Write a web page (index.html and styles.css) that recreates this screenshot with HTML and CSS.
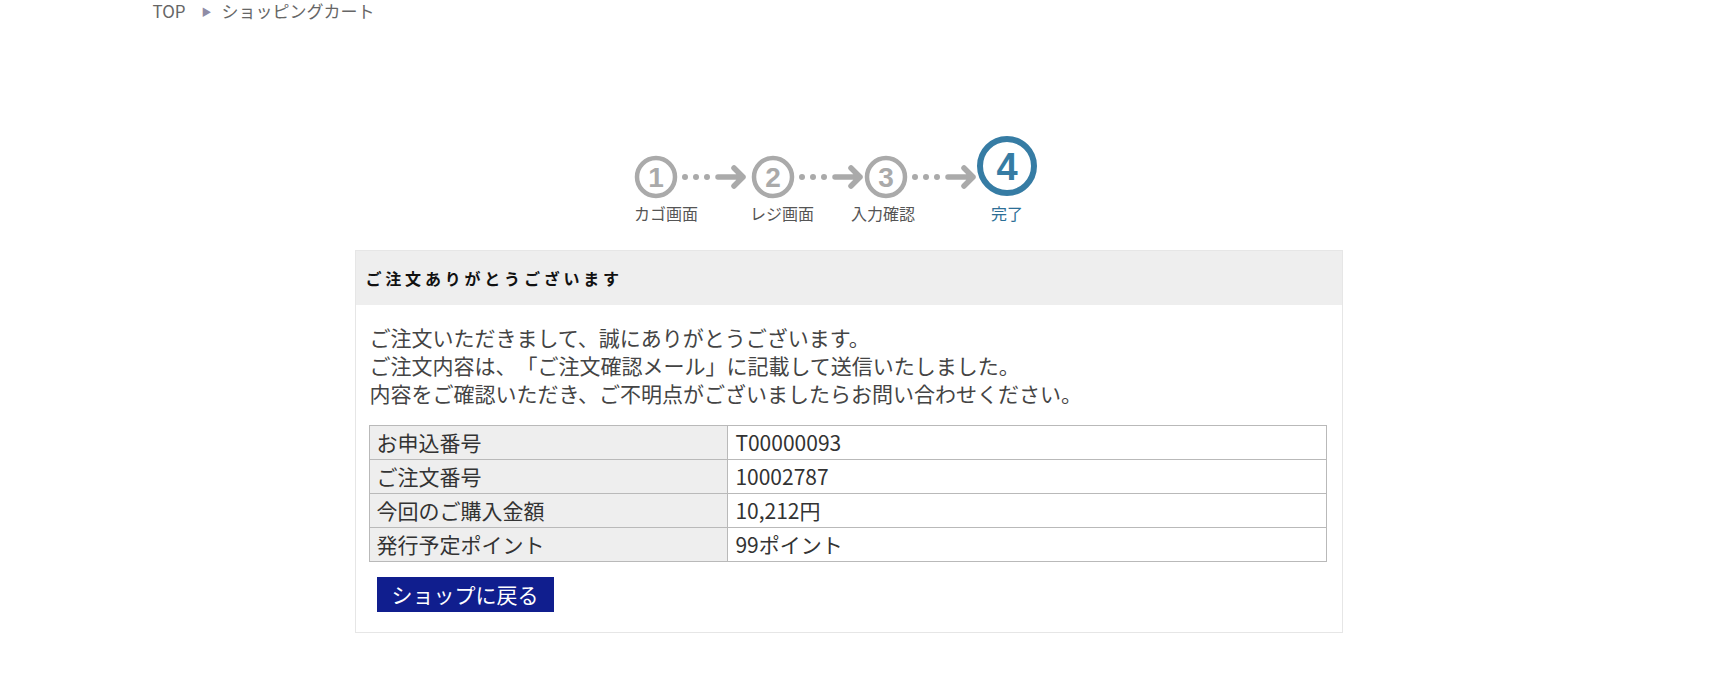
FILE: index.html
```
<!DOCTYPE html>
<html lang="ja">
<head>
  <meta charset="UTF-8">
  <title>ショッピングカート - 完了</title>
  <link rel="stylesheet" href="styles.css">
</head>
<body>
  <div class="wrap">
    <div class="breadcrumb">
      <a href="#">TOP</a><span class="sep">&#9654;</span><span>ショッピングカート</span>
    </div>

    <div class="steps">
      <svg width="988" height="100" viewBox="355 125 988 100">
        <g fill="none" stroke="#aaa" stroke-width="4.5">
          <circle cx="656" cy="177" r="19"/>
          <circle cx="773" cy="177" r="19"/>
          <circle cx="886" cy="177" r="19"/>
        </g>
        <circle cx="1007" cy="166" r="27" fill="none" stroke="#367ca4" stroke-width="6"/>
        <g fill="#aaa">
          <circle cx="685" cy="177" r="3"/><circle cx="696" cy="177" r="3"/><circle cx="707" cy="177" r="3"/>
          <circle cx="802" cy="177" r="3"/><circle cx="813" cy="177" r="3"/><circle cx="824" cy="177" r="3"/>
          <circle cx="915" cy="177" r="3"/><circle cx="926" cy="177" r="3"/><circle cx="937" cy="177" r="3"/>
        </g>
        <g fill="none" stroke="#aaa" stroke-width="5.5" stroke-linecap="round" stroke-linejoin="round">
          <path d="M718 177 H743 M734 168 L743 177 L734 186"/>
          <path d="M835 177 H860 M851 168 L860 177 L851 186"/>
          <path d="M948 177 H973 M964 168 L973 177 L964 186"/>
        </g>
        <g class="step-num" fill="#aaa">
          <text x="656" y="187" text-anchor="middle">1</text>
          <text x="773" y="187" text-anchor="middle">2</text>
          <text x="886" y="187" text-anchor="middle">3</text>
        </g>
        <text class="step-num big" x="1007" y="180" text-anchor="middle" fill="#367ca4">4</text>
        <g class="step-label" fill="#555">
          <text x="666" y="220" text-anchor="middle">カゴ画面</text>
          <text x="782" y="220" text-anchor="middle">レジ画面</text>
          <text x="883" y="220" text-anchor="middle">入力確認</text>
        </g>
        <text class="step-label" x="1007" y="220" text-anchor="middle" fill="#2d6f96">完了</text>
      </svg>
    </div>

    <div class="box">
      <h2 class="box-title">ご注文ありがとうございます</h2>
      <div class="box-body">
        <p class="message">
          ご注文いただきまして、誠にありがとうございます。<br>
          ご注文内容は、「ご注文確認メール」に記載して送信いたしました。<br>
          内容をご確認いただき、ご不明点がございましたらお問い合わせください。
        </p>

        <table class="order-info">
          <tr><th>お申込番号</th><td>T00000093</td></tr>
          <tr><th>ご注文番号</th><td>10002787</td></tr>
          <tr><th>今回のご購入金額</th><td>10,212円</td></tr>
          <tr><th>発行予定ポイント</th><td>99ポイント</td></tr>
        </table>

        <div class="actions">
          <a class="btn" href="#">ショップに戻る</a>
        </div>
      </div>
    </div>
  </div>
</body>
</html>
```
FILE: styles.css
```
body {
  margin: 0;
  background: #fff;
  color: #444;
  font-family: "Noto Sans CJK JP", "Noto Sans", sans-serif;
  text-spacing-trim: space-all;
}

.wrap {
  width: 1414px;
  margin: 0 auto;
}

/* パンくず */
.breadcrumb {
  font-size: 17px;
  line-height: 22px;
  height: 22px;
  color: #666;
}

.breadcrumb a {
  color: #666;
  text-decoration: none;
}

.breadcrumb .sep {
  font-size: 10px;
  color: #8f8ca6;
  margin: 0 10px 0 16px;
  vertical-align: 2px;
}

/* ステップ */
.steps {
  width: 988px;
  height: 100px;
  margin: 103px 0 0 202px;
}

.steps svg {
  display: block;
}

.step-num {
  font-family: "Liberation Sans", Arial, sans-serif;
  font-weight: bold;
  font-size: 28px;
}

.step-num.big {
  font-size: 38px;
}

.step-label {
  font-family: "Noto Sans CJK JP", sans-serif;
  font-size: 16px;
}

/* 完了ボックス */
.box {
  width: 986px;
  margin: 25px 0 0 202px;
  border: 1px solid #e6e6e6;
}

.box-title {
  margin: 0;
  height: 54px;
  line-height: 54px;
  padding: 0 10px;
  background: #eee;
  color: #111;
  font-size: 16px;
  font-weight: bold;
  letter-spacing: 3.8px;
}

.box-body {
  padding: 18px 15px 20px 13px;
}

.message {
  margin: 0;
  font-size: 21px;
  line-height: 28px;
  padding-left: 1px;
}

.order-info {
  width: 100%;
  margin-top: 18px;
  border-collapse: collapse;
  font-size: 21px;
  line-height: 25px;
  color: #333;
}

.order-info th,
.order-info td {
  border: 1px solid #b9b9b9;
  padding: 4px 7px;
  text-align: left;
  font-weight: normal;
}

.order-info th {
  width: 37.5%;
  background: #eee;
}

.actions {
  display: flex;
  margin-top: 15px;
  padding-left: 8px;
}

.btn {
  display: block;
  height: 35px;
  line-height: 35px;
  padding: 0 15px;
  background: #101e8e;
  color: #fff;
  font-size: 21px;
  text-decoration: none;
}
```
